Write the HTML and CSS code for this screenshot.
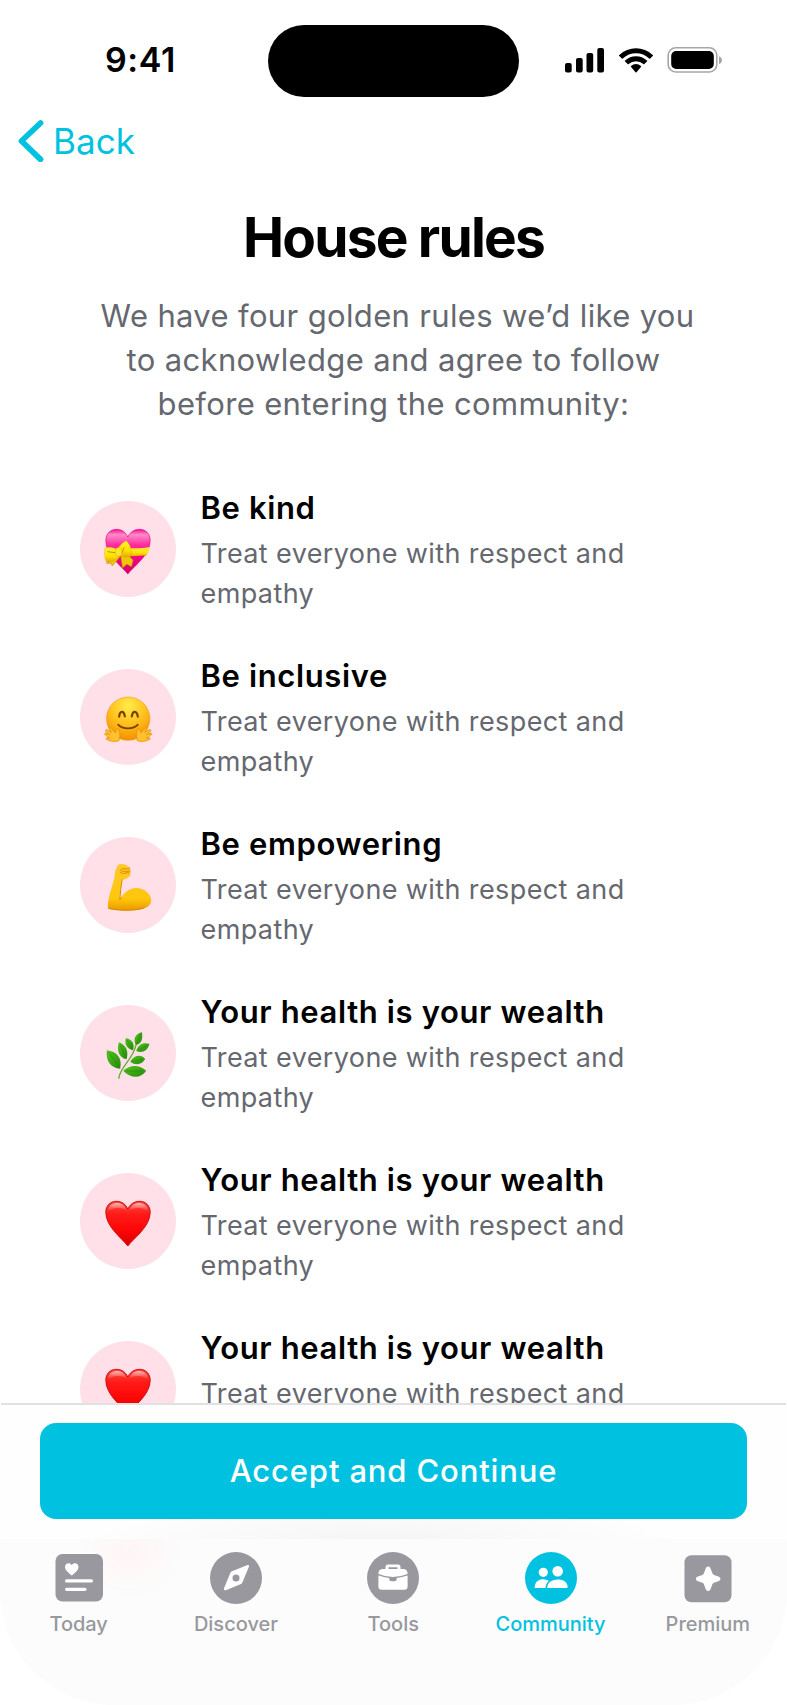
FILE: index.html
```html
<!DOCTYPE html>
<html lang="en">
<head>
<meta charset="utf-8">
<title>House rules</title>
<link rel="stylesheet" href="styles.css">
</head>
<body>
<svg width="0" height="0" class="defs">
  <defs>
    <linearGradient id="pink" x1="0" y1="0" x2="0" y2="1"><stop offset="0" stop-color="#ff0c93"/><stop offset=".12" stop-color="#ff8cc9"/><stop offset=".35" stop-color="#ff2c9d"/><stop offset=".6" stop-color="#f5068a"/><stop offset="1" stop-color="#d3005f"/></linearGradient>
    <linearGradient id="ribbon" x1="0" y1="0" x2="0" y2="1"><stop offset="0" stop-color="#fff03a"/><stop offset=".6" stop-color="#ffe100"/><stop offset="1" stop-color="#e0a800"/></linearGradient>
    <radialGradient id="face" cx=".5" cy=".2" r=".85"><stop offset="0" stop-color="#ffec4a"/><stop offset=".5" stop-color="#ffc01c"/><stop offset="1" stop-color="#f28a00"/></radialGradient>
    <linearGradient id="arm" x1="0" y1="0" x2="0" y2="1"><stop offset="0" stop-color="#ffc928"/><stop offset=".75" stop-color="#ffc60c"/><stop offset="1" stop-color="#e89a00"/></linearGradient>
    <linearGradient id="leaf" x1="0" y1="0" x2="1" y2="1"><stop offset="0" stop-color="#52c51c"/><stop offset="1" stop-color="#238a0b"/></linearGradient>
    <linearGradient id="red" x1="0" y1="0" x2="0" y2="1"><stop offset="0" stop-color="#ff4a40"/><stop offset=".3" stop-color="#ff1a18"/><stop offset=".65" stop-color="#fc0606"/><stop offset="1" stop-color="#d60000"/></linearGradient>
    <linearGradient id="gloss" x1="0" y1="0" x2="0" y2="1"><stop offset="0" stop-color="#fff" stop-opacity=".6"/><stop offset="1" stop-color="#fff" stop-opacity="0"/></linearGradient>
    <symbol id="heart" viewBox="-28.5 -36 288 288">
      <path d="M115 183C98 160 49 126 49 82C49 60 64 49 81 49C98 49 109 59 115 72C121 59 133 49 150 49C168 49 182 61 182 82C182 126 132 160 115 183Z" fill="url(#red)" stroke="#d00a0a" stroke-width="3"/>
      <path d="M56 79C56 62 68 54 82 54C96 54 106 62 110 75C96 66 70 66 56 79ZM120 75C125 62 135 54 149 54C163 54 175 63 175 79C160 66 136 66 120 75Z" fill="url(#gloss)"/>
    </symbol>
  </defs>
</svg>
<div class="screen">
  <header class="status">
    <div class="time">9:41</div>
    <div class="island"></div>
    <svg class="signals" width="160" height="28" viewBox="564 46 160 28">
      <rect x="565" y="63" width="6.7" height="9.6" rx="2"/><rect x="576" y="58" width="6.7" height="14.6" rx="2"/><rect x="586.5" y="53" width="6.7" height="19.6" rx="2"/><rect x="597.3" y="48" width="6.7" height="24.6" rx="2"/>
      <path d="M636 53.2a19 19 0 0 1 13.2 5.3 .7.7 0 0 0 1 0l2.5-2.5a.7.7 0 0 0 0-1.100a24.300 24.300 0 0 0-33.400 0 .7.7 0 0 0 0 1.100l2.500 2.500a.7.7 0 0 0 1 0a19 19 0 0 1 13.200-5.300zM636 61.200a11 11 0 0 1 7.400 2.900 .7.7 0 0 0 1 0l2.500-2.500a.7.7 0 0 0 0-1.100a15.800 15.800 0 0 0-21.800 0 .7.7 0 0 0 0 1.100l2.500 2.500a.7.7 0 0 0 1 0a11 11 0 0 1 7.400-2.900zM640.900 67a.8.800 0 0 0 0-1.100a7.500 7.500 0 0 0-9.800 0 .8.800 0 0 0 0 1.100l4.400 5.300a.7.7 0 0 0 1 0z"/>
      <rect x="668.200" y="47.800" width="48.600" height="24.200" rx="7.500" fill="none" stroke="#a6a6a6" stroke-width="1.600"/>
      <rect x="671.200" y="51" width="42.600" height="18" rx="5"/>
      <path d="M719 56.200v8c4-1.500 4-6.500 0-8z" fill="#a6a6a6"/>
    </svg>
  </header>
  <nav class="back">
    <svg width="26" height="43" viewBox="0 0 26 43"><path d="M22.500 4L3.500 22L22.500 40.300" fill="none" stroke="#00c2e0" stroke-width="5.800" stroke-linecap="round" stroke-linejoin="round"/></svg>
    <span>Back</span>
  </nav>
  <main class="content">
    <h1>House rules</h1>
    <p class="intro"><span class="l1">We have four golden rules we’d like you</span><br>to acknowledge and agree to follow<br>before entering the community:</p>
    <ul class="rules">
      <li><svg class="badge" viewBox="-28.500 -27 288 288">
        <path d="M115 192C98 169 49 136 49 92C49 70 64 58 81 58C98 58 109 68 115 81C121 68 133 58 150 58C168 58 182 70 182 92C182 136 132 169 115 192Z" fill="url(#pink)" stroke="#e20083" stroke-width="2"/>
        <path d="M112 114C140 116 165 114 181 111C179 121 175 130 170 137C150 136 130 139 112 140Z" fill="url(#ribbon)"/>
        <path d="M80 132L66 149L51 160L65 160L68 168L92 140ZM93 134L99 174L112 163L126 170L131 150L111 132Z" fill="#f1c40b" stroke="#b98400" stroke-width="1.500"/>
        <path d="M87 122C72 111 59 110 47 114C43 127 45 144 51 157C66 157 80 147 91 135Z" fill="url(#ribbon)" stroke="#dca500"/>
        <path d="M83 120C88 108 98 98 110 92C121 101 126 117 127 136C116 145 101 143 90 136Z" fill="url(#ribbon)" stroke="#dca500"/>
        <rect x="78" y="113" width="19" height="26" rx="7" fill="#ffe52a" stroke="#ca9700"/>
        <path d="M54 125L77 128M104 112L98 128" stroke="#c79400" stroke-width="3" fill="none"/>
      </svg><div><h2>Be kind</h2><p>Treat everyone with respect and<br>empathy</p></div></li>
      <li><svg class="badge" viewBox="-28.500 -33 288 288">
        <circle cx="116" cy="116" r="65" fill="url(#face)" stroke="#e99000" stroke-width="1.500"/>
        <path d="M89 110C91 91 103 91 106 109M127 109C130 91 142 91 145 110" fill="none" stroke="#754000" stroke-width="6.500" stroke-linecap="round"/>
        <path d="M86 134C99 149 132 149 145 134" fill="none" stroke="#754000" stroke-width="5" stroke-linecap="round"/>
        <g id="hand"><path d="M88 182C75 187 60 183 50 177L52 173L62 175L45 163L48 159L61 164L47 152L51 148L66 157L59 145L64 143L77 158C82 157 78 147 84 146C91 149 94 168 88 182Z" fill="#ffc12d" stroke="#e99300" stroke-width="2.500" stroke-linejoin="round"/></g>
        <use href="#hand" transform="matrix(-1 0 0 1 232 0)"/>
      </svg><div><h2>Be inclusive</h2><p>Treat everyone with respect and<br>empathy</p></div></li>
      <li><svg class="badge" viewBox="-28.500 -24 288 288">
        <path d="M55 190C54 160 68 126 75 98C75 82 80 66 89 58C98 55 114 60 121 68C124 76 121 84 123 89C120 98 107 103 98 104C94 123 93 144 91 162C105 142 121 128 143 129C170 130 187 152 185 170C180 190 151 196 119 196C91 197 67 195 55 190Z" fill="url(#arm)"/>
        <path d="M98 104C94 123 93 144 91 164L97 158M92 77C102 63 110 78 121 69M98 79C108 75 110 84 122 77M93 83C101 89 111 81 119 84" fill="none" stroke="#d98a00" stroke-width="3" stroke-linecap="round"/>
        <path d="M57 190C88 198 138 198 165 188" fill="none" stroke="#d88600" stroke-width="3"/>
      </svg><div><h2>Be empowering</h2><p>Treat everyone with respect and<br>empathy</p></div></li>
      <li><svg class="badge" viewBox="-28.500 -30 288 288">
        <path d="M88 191C89 158 131 134 140 88" fill="none" stroke="#61ad32" stroke-width="4"/>
        <g fill="url(#leaf)"><path d="M52 106C82 109 99 130 92 161C64 160 48 138 52 106Z"/><path d="M88 82C108 88 119 109 111 133C88 128 81 107 88 82Z"/><path d="M109 69C129 74 137 88 130 106C112 101 104 87 109 69Z"/><path d="M157 51C161 72 156 86 139 91C130 72 137 57 157 51Z"/><path d="M180 87C174 108 158 115 140 108C146 88 162 81 180 87Z"/><path d="M167 132C157 150 138 152 122 140C134 120 154 117 167 132Z"/><path d="M170 167C153 191 125 191 101 167C122 148 150 148 170 167Z"/></g>
        <path d="M57 112L89 156M92 90L109 128M113 75L128 101M154 57L141 86M175 90L146 105M160 133L128 139M160 168L108 168" stroke="#247d10" stroke-width="1.500" fill="none"/>
      </svg><div><h2>Your health is your wealth</h2><p>Treat everyone with respect and<br>empathy</p></div></li>
      <li><svg class="badge"><use href="#heart"/></svg><div><h2>Your health is your wealth</h2><p>Treat everyone with respect and<br>empathy</p></div></li>
      <li><svg class="badge"><use href="#heart"/></svg><div><h2>Your health is your wealth</h2><p>Treat everyone with respect and</p></div></li>
    </ul>
  </main>
  <div class="action"><button type="button">Accept and Continue</button></div>
  <footer class="tabs">
    <a class="tab"><svg viewBox="0 0 54 54"><rect x="3.500" y="3" width="47.500" height="47.500" rx="7"/><g fill="#fff"><path d="M19.800 24.500C16 21.500 13 19 13 16C13 11.800 18 11 19.800 14.200C21.600 11 26.500 11.800 26.500 16C26.500 19 23.600 21.500 19.800 24.500Z"/><rect x="13" y="28.300" width="28" height="3.200" rx="1.600"/><rect x="13" y="36.700" width="21.500" height="3.200" rx="1.600"/></g></svg><span>Today</span></a>
    <a class="tab"><svg viewBox="0 0 54 54"><circle cx="27" cy="27" r="26"/><path d="M21.500 21.500Q22 20.800 23 20.300L38.500 14.100Q40.800 13.500 39.800 16L33.400 31.500Q33 32.500 32 33L17.500 39.100Q14.400 40 14.900 37.500ZM27 23.500A3.500 3.500 0 1 0 27 30.500A3.500 3.500 0 1 0 27 23.500Z" fill="#fff" fill-rule="evenodd"/></svg><span>Discover</span></a>
    <a class="tab"><svg viewBox="0 0 54 54"><circle cx="27" cy="27" r="26"/><path d="M19.500 18V16Q19.500 13.500 22 13.500H32Q34.500 13.500 34.500 16V18H37Q41.600 18 41.600 23Q34 26 27 26Q20 26 12.400 23Q12.400 18 17 18ZM22.500 16.200V18H31.500V16.200ZM12.400 24.500Q18 26.300 23.300 26.900V28Q23.300 30.200 25.500 30.200H28.500Q30.700 30.200 30.700 28V26.900Q36 26.300 41.600 24.500V35.500Q41.600 38.800 38.300 38.800H15.700Q12.400 38.800 12.400 35.500Z" fill="#fff" fill-rule="evenodd"/></svg><span>Tools</span></a>
    <a class="tab active"><svg viewBox="0 0 54 54"><circle cx="27" cy="27" r="26"/><g fill="#fff"><circle cx="19.300" cy="21.300" r="4.600"/><circle cx="33.700" cy="20.300" r="5.300"/><path d="M10.700 37V35.500C11.500 27 21 27 24.800 30Q21.500 33 21.500 37ZM23.200 37C23.200 26 43.700 26 43.700 36Q43.700 37 42.500 37Z"/></g></svg><span>Community</span></a>
    <a class="tab"><svg viewBox="0 0 54 54"><rect x="3.500" y="4.300" width="47" height="47" rx="7"/><path d="M25 16.800Q27.200 14.300 29.300 16.800L31.500 22.600Q32 23.500 33 24L38 25.700Q41 27.800 38 29.900L33 31.700Q32 32.200 31.500 33.100L29.300 38.800Q27.200 41.300 25 38.800L22.800 33.100Q22.400 32.200 21.400 31.700L16.300 29.900Q13.300 27.800 16.300 25.700L21.400 24Q22.400 23.500 22.800 22.600Z" fill="#fff"/></svg><span>Premium</span></a>
  </footer>
</div>
</body>
</html>
```
FILE: styles.css
```css
* { box-sizing: border-box; }
body { margin: 0; background: #fff; font-family: Inter, "Liberation Sans", sans-serif; color: #000; }
.defs { position: absolute; }
.screen { width: 787px; height: 1705px; display: flex; flex-direction: column; overflow: hidden; background: #fff; }
.status { height: 97px; padding-top: 25px; display: grid; grid-template-columns: 268.3px 250.4px 1fr; flex: none; }
.time { padding-left: 105px; line-height: 70px; font-size: 34px; font-weight: 600; letter-spacing: 0.6px; }
.island { height: 72px; border-radius: 36px; background: #000; }
.signals { margin: 21px 0 0 45.3px; }
.back { height: 89px; padding: 22px 0 0 18px; display: flex; gap: 9px; color: #00c2e0; font-size: 35px; line-height: 45px; letter-spacing: 0.1px; flex: none; }
.content { height: 1217px; flex: none; overflow: hidden; }
h1 { margin: 18px 0 0; text-align: center; font-size: 55px; line-height: 66px; font-weight: 700; letter-spacing: -1.8px; }
.intro { margin: 24px 0 0; text-align: center; font-size: 31px; line-height: 44px; letter-spacing: 0.35px; color: #65686f; white-space: nowrap; }
.l1 { position: relative; left: 4px; }
.rules { margin: 53px 0 0; padding: 0 0 0 80px; list-style: none; }
.rules li { height: 168px; display: flex; gap: 24.5px; }
.badge { width: 96px; height: 96px; margin-top: 22px; border-radius: 50%; background: #ffdfe8; flex: none; }
.rules h2 { margin: 7px 0 0; font-size: 31px; line-height: 44px; font-weight: 600; letter-spacing: 0.63px; }
.rules p { margin: 4px 0 0; font-size: 27px; line-height: 40px; letter-spacing: 0.39px; color: #65686f; white-space: nowrap; }
.action { height: 136px; flex: none; margin: 0 1px; padding: 18px 39px 0; border-top: 2px solid #e1e1e2; background: radial-gradient(ellipse 290px 34px at 380px 134px, #f5f5f6, #fefefe); }
.action button { display: block; width: 707px; height: 96px; border: 0; border-radius: 16px; background: #00c2e0; color: #fff; font: 500 31px/96px Inter, sans-serif; padding: 0; letter-spacing: .85px; }
.tabs { height: 166px; flex: none; display: grid; grid-template-columns: repeat(5, 157.3px); border-radius: 0 0 115px 115px; background: radial-gradient(ellipse 50px 45px at 130px 12px, #fff5f5, #fcfcfc00), #fcfcfc; }
.tab { display: flex; flex-direction: column; align-items: center; padding-top: 12px; color: #98989e; font-size: 20px; font-weight: 500; line-height: 26px; }
.tab svg { width: 54px; height: 54px; fill: #98989e; }
.tab span { margin-top: 6px; }
.active { color: #00c2e0; }
.active svg { fill: #00c2e0; }
```
